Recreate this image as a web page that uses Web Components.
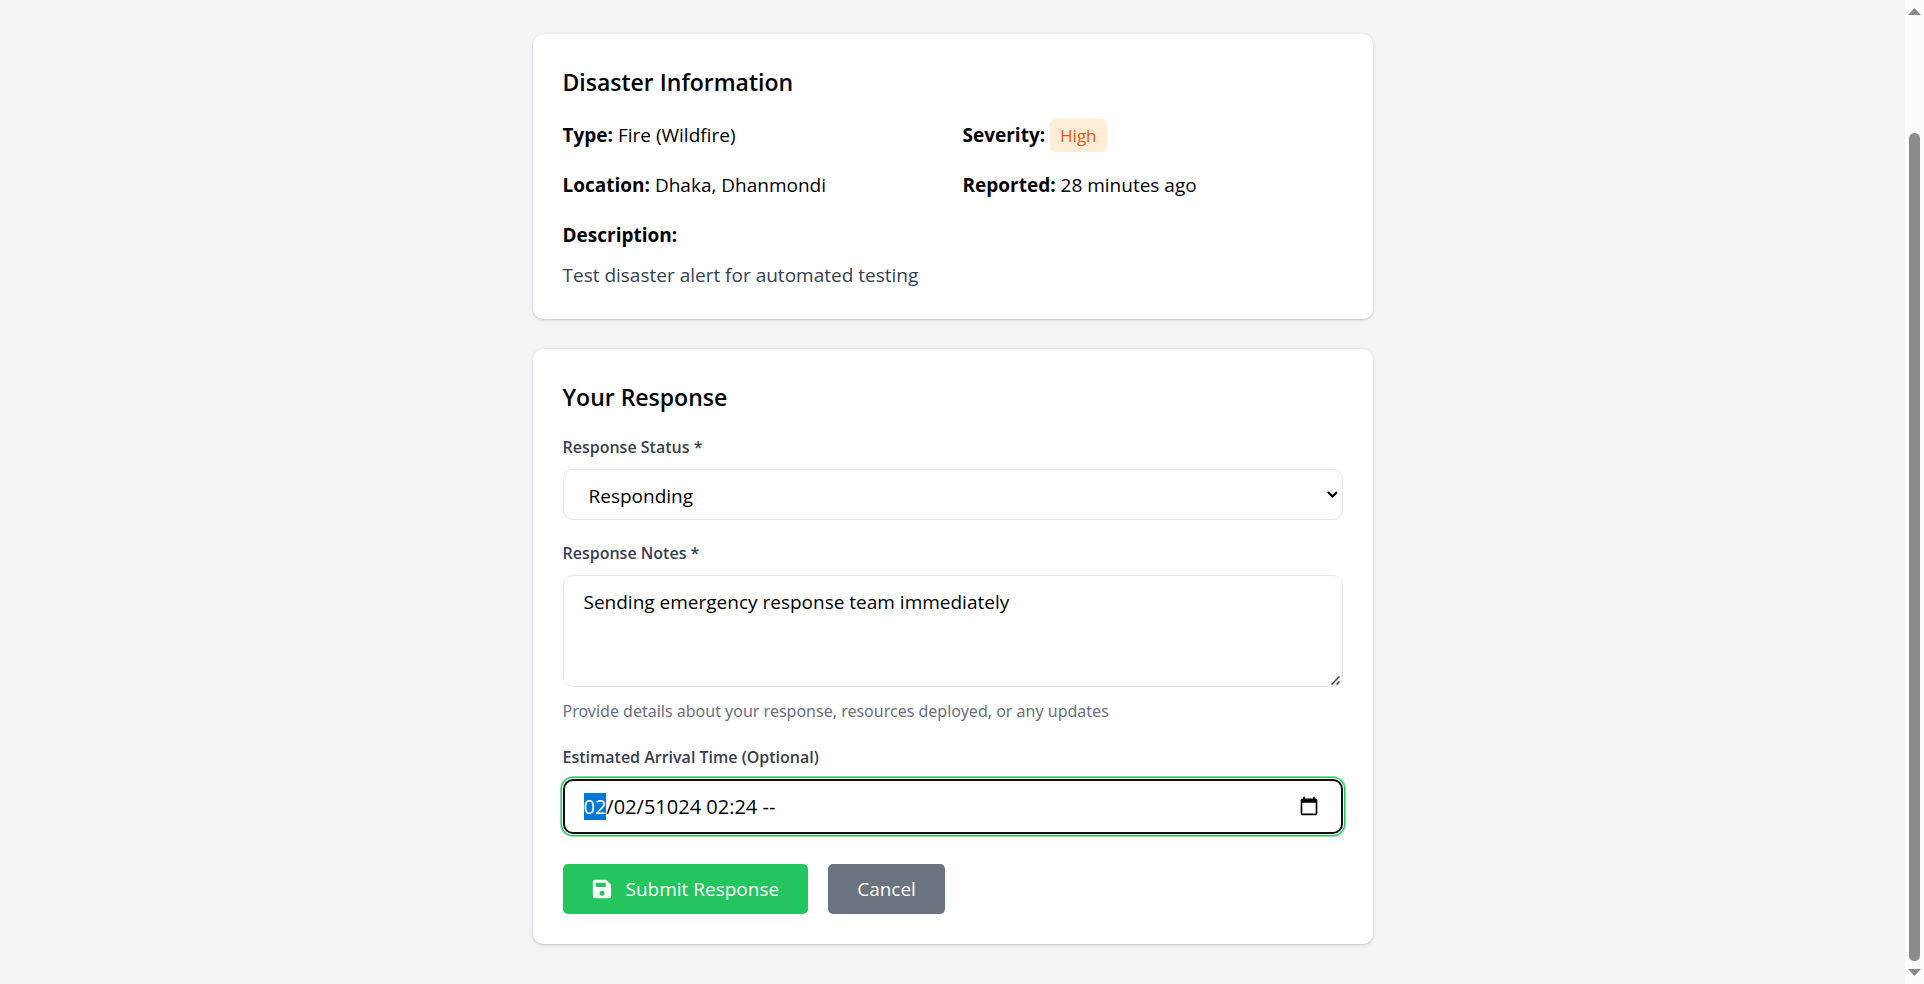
<!DOCTYPE html>
<html lang="en">
<head>
<meta charset="utf-8">
<title>Disaster Response</title>
<style>
  html { height: 100%; }
  body {
    margin: 0;
    min-height: 100%;
    display: flex;
    background: #f3f4f6;
    color: #000;
    font-family: "Open Sans", "Noto Sans", sans-serif;
    font-size: 19px;
    line-height: 30px;
  }
</style>
</head>
<body>
<response-page></response-page>
<scroll-rail></scroll-rail>

<script>
const define = (name, html, setup) => {
  const template = document.createElement('template');
  template.innerHTML = html;
  customElements.define(name, class extends HTMLElement {
    constructor() {
      super();
      this.attachShadow({ mode: 'open' }).append(template.content.cloneNode(true));
    }
    connectedCallback() { if (setup) setup(this, this.shadowRoot); }
  });
};

define('info-card', `
  <style>
    :host { display: block; box-sizing: border-box; padding: 31px 30px 29px; background: #fff; border-radius: 10px;
            box-shadow: 0 1px 4px rgba(0,0,0,.1), 0 1px 2px rgba(0,0,0,.1); }
    h2 { margin: 0 0 20px; font-size: 23px; line-height: 35px; font-weight: 600; }
  </style>
  <h2></h2>
  <slot></slot>
`, (host, root) => { root.querySelector('h2').textContent = host.getAttribute('heading'); });

define('info-item', `
  <style>
    :host { display: block; }
    b { font-weight: 700; }
  </style>
  <b></b> <slot></slot>
`, (host, root) => { root.querySelector('b').textContent = host.getAttribute('name') + ':'; });

define('severity-badge', `
  <style>
    :host { display: inline-block; margin: -2px 0; padding: 4px 10px; border-radius: 5px; background: #ffedd5;
            color: #ea580c; font-size: 17px; line-height: 25px; }
  </style>
  <slot></slot>
`);

define('disaster-summary', `
  <style>
    :host { display: block; }
    .facts { display: grid; grid-template-columns: 1fr 1fr; gap: 20px; grid-auto-rows: 30px; }
    .wide { grid-column: 1 / -1; }
    p { margin: 10px 0 0; color: #374151; }
  </style>
  <div class="facts">
    <info-item name="Type">Fire (Wildfire)</info-item>
    <info-item name="Severity"><severity-badge>High</severity-badge></info-item>
    <info-item name="Location">Dhaka, Dhanmondi</info-item>
    <info-item name="Reported">28 minutes ago</info-item>
    <info-item class="wide" name="Description"></info-item>
  </div>
  <p>Test disaster alert for automated testing</p>
`);

define('response-form', `
  <style>
    :host { display: block; }
    form { display: flex; flex-direction: column; gap: 21px; }
    label { display: block; margin-bottom: 9px; font-size: 16px; line-height: 25px; font-weight: 600; color: #374151; }
    select, textarea, input { display: block; box-sizing: border-box; width: 100%; margin: 0; border: 1px solid #e5e7eb;
      border-radius: 10px; background: #fff; color: #000; font: inherit; }
    .pick, .date { position: relative; }
    select { height: 51px; padding: 2px 25px 0; appearance: none; }
    .pick svg { position: absolute; right: 4px; top: 20px; pointer-events: none; }
    textarea { height: 112px; padding: 11px 20px 9px; resize: vertical; }
    textarea::-webkit-resizer {
      background: url("data:image/svg+xml,%3Csvg xmlns='http://www.w3.org/2000/svg' width='15' height='15'%3E%3Cpath d='M4.500 13.500l8-8M9.500 13.500l3-3' stroke='%23444' stroke-width='1.500' fill='none'/%3E%3C/svg%3E") no-repeat right bottom;
    }
    .help { margin: 12px 0 0; font-family: "Noto Sans", sans-serif; font-size: 16px; line-height: 25px; color: #6b7280; }
    input { height: 55px; padding: 10px 60px 10px 20px; font-size: 20px; }
    input:focus { outline: 2px solid #101010; outline-offset: -2px; box-shadow: 0 0 0 1px #fff, 0 0 0 2px #22c55e, 0 0 0 3px #86e0a6; }
    input::selection { background: #0078d7; color: #fff; }
    .date button { position: absolute; right: 24px; top: 50%; width: 20px; height: 20px; margin-top: -11px; padding: 0;
      border: 0; background: none; }
    .date svg { display: block; }
    .actions { display: flex; gap: 20px; padding: 9px 0 1px; }
    .actions button { display: flex; align-items: center; height: 50px; padding: 0 29px; border: 0; border-radius: 5px;
      background: #6b7280; color: #fff; font: inherit; }
    .actions .submit { background: #22c55e; gap: 14px; }
  </style>
  <form>
    <div>
      <label for="status">Response Status *</label>
      <div class="pick">
        <select id="status"><option>Responding</option></select>
        <svg width="13" height="11" viewBox="0 0 13 11" aria-hidden="true"><path d="M2 3l4.500 4.500L11 3" fill="none" stroke="#000" stroke-width="2.200"/></svg>
      </div>
    </div>
    <div>
      <label for="notes">Response Notes *</label>
      <textarea id="notes" aria-describedby="hint">Sending emergency response team immediately</textarea>
      <p class="help" id="hint">Provide details about your response, resources deployed, or any updates</p>
    </div>
    <div>
      <label for="eta">Estimated Arrival Time (Optional)</label>
      <div class="date">
        <input id="eta" type="text" value="02/02/51024 02:24 --">
        <button type="button" aria-label="Open calendar">
          <svg width="20" height="20" viewBox="0 0 24 24"><path d="M20 3h-1V1h-2v2H7V1H5v2H4c-1.100 0-2 .9-2 2v16c0 1.100.9 2 2 2h16c1.100 0 2-.9 2-2V5c0-1.100-.9-2-2-2zm0 18H4V8h16v13z"/></svg>
        </button>
      </div>
    </div>
    <div class="actions">
      <button type="button" class="submit">
        <svg width="20" height="20" viewBox="0 0 24 24" fill="#fff" aria-hidden="true"><path fill-rule="evenodd" d="M4 1h13l6 6v13a3 3 0 0 1-3 3H4a3 3 0 0 1-3-3V4a3 3 0 0 1 3-3zM4.500 4.500v5h12v-5zM12 14a3 3 0 1 0 0 6 3 3 0 0 0 0-6z"/></svg>
        Submit Response
      </button>
      <button type="button">Cancel</button>
    </div>
  </form>
`, (host, root) => {
  const eta = root.getElementById('eta');
  eta.focus({ preventScroll: true });
  eta.setSelectionRange(0, 2);
});

define('response-page', `
  <style>
    :host { display: block; flex: 1; min-width: 0; }
    main { display: flex; flex-direction: column; gap: 30px; max-width: 840px; margin: 0 auto; padding: 34px 0 40px; }
  </style>
  <main>
    <info-card heading="Disaster Information"><disaster-summary></disaster-summary></info-card>
    <info-card heading="Your Response"><response-form></response-form></info-card>
  </main>
`);

define('scroll-rail', `
  <style>
    :host { display: flex; flex-direction: column; align-items: center; box-sizing: border-box; flex: none; width: 19px;
            padding: 8px 0; background: #fcfcfc; }
    svg { display: block; fill: #8b8b8b; }
    .track { flex: 1; display: flex; flex-direction: column; width: 11px; margin: 8px 0; }
    .above { flex: 110; }
    .thumb { flex: 828; border-radius: 6px; background: #8b8b8b; }
  </style>
  <svg width="13" height="7" viewBox="0 0 13 7"><path d="M0 7 6.500 0 13 7z"/></svg>
  <div class="track"><div class="above"></div><div class="thumb"></div></div>
  <svg width="13" height="7" viewBox="0 0 13 7"><path d="M0 0 6.500 7 13 0z"/></svg>
`);
</script>
</body>
</html>
